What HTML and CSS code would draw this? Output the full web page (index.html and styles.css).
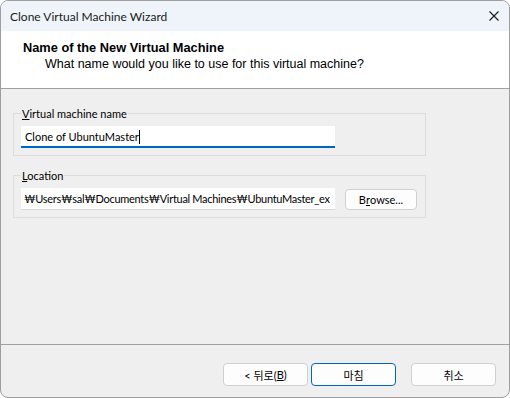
FILE: index.html
```html
<html>
<head>
<title>Clone Virtual Machine Wizard</title>
<link rel="stylesheet" href="styles.css">
<meta http-equiv="Content-Type" content="text/html; charset=UTF-8">
</head>
<body>
<div class="window">
  <div class="titlebar">
    <span class="title-text">Clone Virtual Machine Wizard</span>
    <svg class="close-icon" width="10" height="10" viewBox="0 0 10 10">
      <path d="M0.5 0.5 L9.5 9.5 M9.5 0.5 L0.5 9.5" stroke="#1a1a1a" stroke-width="1.1" fill="none"/>
    </svg>
  </div>
  <div class="header">
    <div class="header-title">Name of the New Virtual Machine</div>
    <div class="header-sub">What name would you like to use for this virtual machine?</div>
  </div>
  <div class="content">
    <fieldset class="group">
      <legend><u>V</u>irtual machine name</legend>
      <div class="field field-active">Clone of UbuntuMaster<span class="caret"></span></div>
    </fieldset>
    <fieldset class="group group-second">
      <legend><u>L</u>ocation</legend>
      <div class="row">
        <div class="field">₩Users₩sal₩Documents₩Virtual Machines₩UbuntuMaster_ex</div>
        <div class="button browse">B<u>r</u>owse...</div>
      </div>
    </fieldset>
  </div>
  <div class="footer">
    <div class="button">&lt; 뒤로(<u>B</u>)</div>
    <div class="button button-default">마침</div>
    <div class="button button-cancel">취소</div>
  </div>
</div>
</body>
</html>
```

FILE: styles.css
```css
body {
 margin: 0;
 background-color: #ffffff;
 font-family: Lato, "Noto Sans CJK KR", sans-serif;
 font-size: 11px;
 color: #000000;
}
.window {
 height: 398px;
 box-sizing: border-box;
 border: 1px solid #9e9e9e;
 border-radius: 8px;
 overflow: hidden;
 display: flex;
 flex-direction: column;
 background-color: #efefef;
}
.titlebar {
 height: 30px;
 flex: none;
 background-color: #eef4f9;
 display: flex;
 align-items: center;
 justify-content: space-between;
 padding: 0 10px 0 9px;
 font-size: 12px;
}
.title-text {
 color: #1a1a1a;
}
.close-icon {
 display: block;
}
.header {
 height: 58px;
 flex: none;
 box-sizing: border-box;
 background-color: #ffffff;
 border-bottom: 1px solid #a0a0a0;
 padding: 9px 0 0 22px;
 font-family: "Liberation Sans", "Noto Sans CJK KR", sans-serif;
 font-size: 12.5px;
 line-height: 16px;
}
.header-title {
 font-weight: bold;
 font-size: 12.8px;
}
.header-sub {
 padding-left: 22px;
}
.content {
 flex: 1;
 padding: 17px 0 0 12px;
}
.group {
 margin: 0;
 width: 413px;
 box-sizing: border-box;
 border: 1px solid #dcdcdc;
 padding: 5px 7px 7px 7px;
}
.group legend {
 padding: 0 1px;
 line-height: 15px;
}
.group-second {
 margin-top: 12px;
}
.row {
 display: flex;
 align-items: center;
 gap: 10px;
}
.field {
 width: 314px;
 height: 22px;
 box-sizing: border-box;
 background-color: #ffffff;
 border-bottom: 1px solid #d8d8d8;
 padding: 0 3px;
 line-height: 21px;
 white-space: nowrap;
 overflow: hidden;
 letter-spacing: -0.3px;
}
.field-active {
 border-bottom: 2px solid #0067c0;
 padding-left: 4px;
 letter-spacing: 0;
}
.caret {
 display: inline-block;
 width: 1px;
 height: 14px;
 background-color: #000000;
 vertical-align: -3px;
}
.button {
 width: 85px;
 height: 23px;
 box-sizing: border-box;
 border: 1px solid #d0d0d0;
 border-radius: 4px;
 background-color: #fdfdfd;
 display: flex;
 align-items: center;
 justify-content: center;
}
.browse {
 width: 72px;
 height: 21px;
}
.footer {
 height: 53px;
 flex: none;
 box-sizing: border-box;
 border-top: 1px solid #a0a0a0;
 display: flex;
 justify-content: flex-end;
 align-items: flex-start;
 gap: 3px;
 padding: 18px 13px 0 0;
}
.button-default {
 border-color: #0067c0;
}
.button-cancel {
 margin-left: 12px;
}
```
